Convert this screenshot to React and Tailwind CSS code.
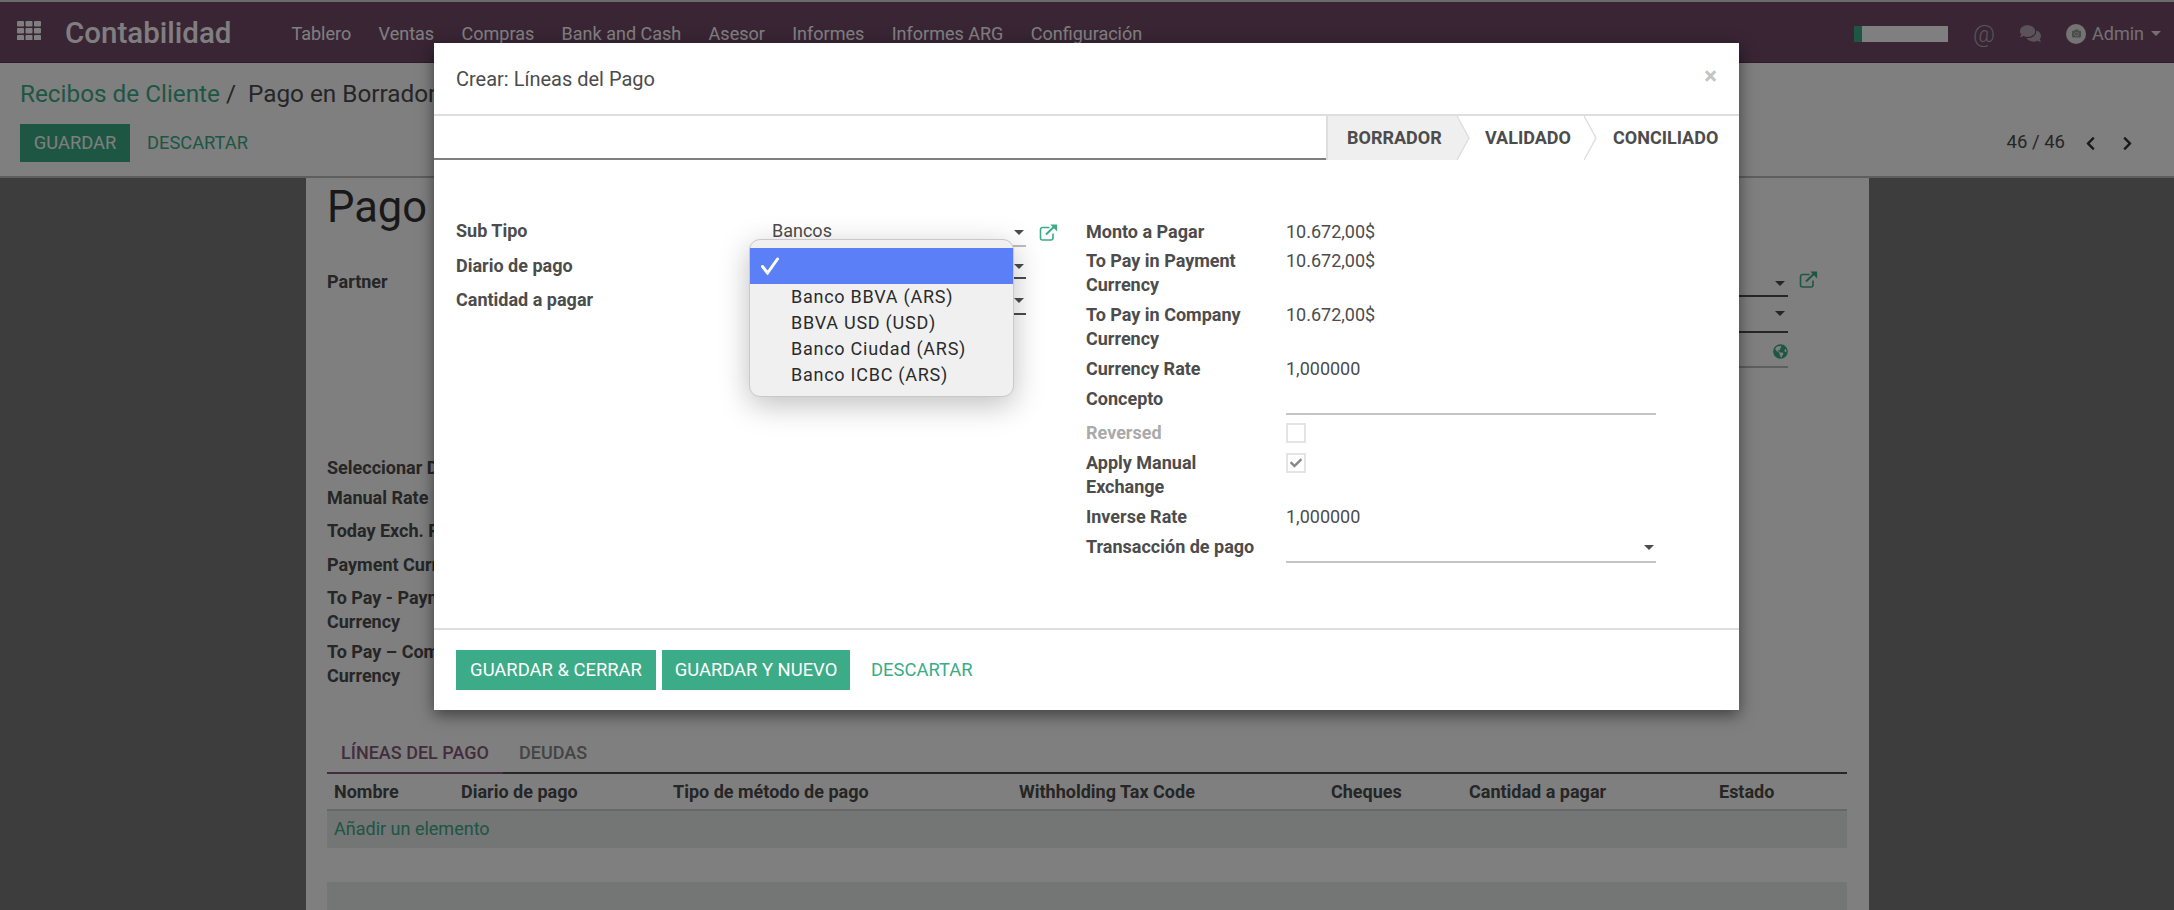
import React from "react";
import { FaCheck, FaChevronLeft, FaChevronRight, FaComments, FaCamera, FaGlobeAmericas } from "react-icons/fa";

const Caret = ({ className = "" }) => (
  <span className={"block w-0 h-0 border-x-[5px] border-x-transparent border-t-[5px] border-t-[#4c4c4c] " + className} />
);

const ExtLink = ({ className = "" }) => (
  <svg viewBox="0 0 18 17" className={"w-[19px] h-[17px] " + className} fill="none" stroke="currentColor">
    <path d="M10 3.5H3a2 2 0 0 0-2 2V14a2 2 0 0 0 2 2h8.5a2 2 0 0 0 2-2V9.5" strokeWidth="1.6" />
    <path d="M6.5 10.5 14.5 2.7" strokeWidth="2" />
    <path d="M10.8 0.6H17.6V7.4Z" fill="currentColor" stroke="none" />
  </svg>
);

const AppsIcon = () => (
  <svg viewBox="0 0 24 19" className="w-[24px] h-[19px] -mt-[6px]" fill="#fff">
    {[0, 7, 14].map((y) =>
      [0, 8.5, 17].map((x) => <rect key={x + "-" + y} x={x} y={y} width="7" height="5.5" rx="1" />)
    )}
  </svg>
);

const menu = ["Tablero", "Ventas", "Compras", "Bank and Cash", "Asesor", "Informes", "Informes ARG", "Configuración"];

const Nav = () => (
  <header className="h-[63px] shrink-0 border-t-2 border-t-[#d8d8d8] border-b border-b-[#5c3a54] bg-[#734a69] text-white flex items-center pl-[17px] pr-[13px] pt-[3px]">
    <AppsIcon />
    <span className="ml-[24px] text-[29.5px] font-medium leading-none">Contabilidad</span>
    <nav className="ml-[60px] flex gap-[27.4px] text-[18px]">
      {menu.map((m) => (
        <span key={m}>{m}</span>
      ))}
    </nav>
    <div className="ml-auto flex items-center">
      <div className="w-[94px] h-[16px] bg-white flex">
        <div className="w-[8px] bg-[#3bac87]" />
      </div>
      <span className="ml-[25px] text-[24px] font-light text-[#b9a6b5] leading-none">@</span>
      <FaComments className="ml-[25px] text-[21px] text-[#b9a6b5]" />
      <span className="ml-[25px] w-[20px] h-[20px] rounded-full bg-[#e8e8e8] flex items-center justify-center">
        <FaCamera className="text-[9px] text-[#999]" />
      </span>
      <span className="ml-[6px] text-[18px] text-[#e8e0e6]">Admin</span>
      <span className="ml-[7px] w-0 h-0 border-x-[5px] border-x-transparent border-t-[5px] border-t-[#e8e0e6]" />
    </div>
  </header>
);

const ControlPanel = () => (
  <section className="h-[115px] shrink-0 bg-white border-b-2 border-b-[#bdbdbd] px-[20px] pt-[13px] flex flex-col text-[#4c4c4c]">
    <div className="text-[24.3px] leading-[36px]">
      <span className="text-[#3bac87]">Recibos de Cliente</span> <span>/&nbsp; Pago en Borrador</span>
    </div>
    <div className="mt-[12px] flex items-center justify-between">
      <div className="flex items-center">
        <button className="w-[110px] h-[38px] bg-[#3bac87] text-white text-[18.3px]">GUARDAR</button>
        <span className="ml-[17px] text-[18.3px] text-[#3bac87]">DESCARTAR</span>
      </div>
      <div className="flex items-center pr-[19px]">
        <span className="text-[18.5px]">46 / 46</span>
        <FaChevronLeft className="ml-[18px] text-[15px] text-[#333]" />
        <FaChevronRight className="ml-[22px] text-[15px] text-[#333]" />
      </div>
    </div>
  </section>
);

const bgLabels = [
  ["Seleccionar Diario", "mt-[0px]"],
  ["Manual Rate", "mt-[6px]"],
  ["Today Exch. Rate", "mt-[9px]"],
  ["Payment Currency", "mt-[10px]"],
  ["To Pay - Payment\nCurrency", "mt-[9px]"],
  ["To Pay – Company\nCurrency", "mt-[6px]"],
];

const tableCols = [
  ["Nombre", "w-[127px]"],
  ["Diario de pago", "w-[212px]"],
  ["Tipo de método de pago", "w-[346px]"],
  ["Withholding Tax Code", "w-[312px]"],
  ["Cheques", "w-[138px]"],
  ["Cantidad a pagar", "w-[250px]"],
  ["Estado", ""],
];

const Sheet = () => (
  <div className="flex-1 min-h-0 bg-[#7a7a7a] flex justify-center overflow-hidden">
    <div className="ml-[1px] w-[1563px] bg-white pl-[21px] pr-[22px] text-[#4c4c4c] text-[18px]">
      <div className="h-[62px] text-[43.5px] leading-[60px] text-[#333]">Pago</div>
      <div className="flex h-[199px] pt-[27px]">
        <span className="font-bold w-[200px] pt-[1px]">Partner</span>
        <div className="ml-auto w-[200px] mr-[29px] flex flex-col pr-[30px] h-[102px]">
          <div className="relative h-[30px] border-b-2 border-b-[#4c4c4c]">
            <Caret className="absolute right-[3px] top-[14px]" />
            <ExtLink className="absolute -right-[30px] top-[4px] text-[#3bac87]" />
          </div>
          <div className="relative h-[36px] border-b-2 border-b-[#4c4c4c]">
            <Caret className="absolute right-[3px] top-[14px]" />
          </div>
          <div className="relative h-[35px] border-b-2 border-b-[#bdbdbd]">
            <FaGlobeAmericas className="absolute right-[0px] top-[11px] text-[15px] text-[#3bac87]" />
          </div>
        </div>
      </div>
      <div className="font-bold leading-[24px] h-[296px]">
        <div className="pt-[17px]">
          {bgLabels.map(([t, m]) => (
            <div key={t} className={"whitespace-pre-line " + m}>
              {t}
            </div>
          ))}
        </div>
      </div>
      <div className="flex border-b-2 border-b-[#4c4c4c] h-[40px] -mt-[1px]">
        <span className="w-[176px] border-b-2 border-b-[#875a7b] -mb-[2px] text-center font-medium text-[#875a7b] leading-[38px] uppercase">
          Líneas del Pago
        </span>
        <span className="ml-[16px] font-medium text-[#888] leading-[38px]">DEUDAS</span>
      </div>
      <div className="flex h-[37px] items-center border-b-2 border-b-[#cfcfcf] pl-[7px] font-bold whitespace-nowrap">
        {tableCols.map(([c, w]) => (
          <span key={c} className={w}>
            {c}
          </span>
        ))}
      </div>
      <div className="h-[37px] bg-[#e8ebea] pl-[7px] leading-[36px] text-[#3bac87]">Añadir un elemento</div>
      <div className="h-[34px]" />
      <div className="h-[62px] bg-[#e8ebea]" />
    </div>
  </div>
);

const Chevron = () => (
  <svg viewBox="0 0 13 44" className="w-[13px] h-[44px] absolute -right-[13px] top-0 z-10" fill="none">
    <path d="M0 0 12 22 0 44" stroke="#dcdcdc" strokeWidth="1.3" />
  </svg>
);

const StatusBar = () => (
  <div className="h-[46px] border-t-2 border-t-[#dedede] flex items-stretch">
    <div className="w-[892px] border-b-2 border-b-[#7f7f7f]" />
    <div className="relative w-[131px] bg-[#efefef] border-l-2 border-l-[#dedede] flex items-center pl-[19px] font-bold text-[18px] text-[#4c4c4c]">
      BORRADOR
      <svg viewBox="0 0 13 44" className="w-[13px] h-[44px] absolute -right-[13px] top-0" fill="#efefef">
        <path d="M0 0 12 22 0 44Z" />
      </svg>
      <Chevron />
    </div>
    <div className="relative w-[127px] flex items-center pl-[28px] font-bold text-[18px] text-[#4c4c4c]">
      VALIDADO
      <Chevron />
    </div>
    <div className="flex items-center pl-[29px] font-bold text-[18px] text-[#4c4c4c]">CONCILIADO</div>
  </div>
);

const LeftRow = ({ label, value, h, link, tone, shift }) => (
  <div className={"flex " + h}>
    <span className={"w-[315px] font-bold " + (shift || "")}>{label}</span>
    <div className={"relative w-[255px] border-b-2 " + (tone || "border-b-[#4c4c4c]")}>
      <span className={"block pl-[1px] " + (shift || "")}>{value}</span>
      <Caret className="absolute right-[2px] top-[10px]" />
      {link && <ExtLink className="absolute -right-[32px] top-[4px] text-[#3bac87]" />}
    </div>
  </div>
);

const RightRow = ({ label, children, mb, muted }) => (
  <div className={"flex " + mb}>
    <span className={"w-[200px] pr-[20px] font-bold " + (muted ? "text-[#aaa]" : "")}>{label}</span>
    <div className="w-[370px]">{children}</div>
  </div>
);

const Box = ({ checked }) => (
  <span className="mt-[2px] block w-[20px] h-[20px] border-2 border-[#e4e4e4] flex items-center justify-center">
    {checked && <FaCheck className="text-[12px] text-[#888]" />}
  </span>
);

const NativeSelect = () => (
  <div className="absolute left-[315px] top-[79px] w-[265px] h-[158px] rounded-[11px] bg-[#f0f0f0] border border-[#c9c9c9] shadow-[0_8px_30px_rgba(0,0,0,0.25)] pt-[8px] text-[18px] tracking-[0.75px] text-[#2b2b2b]">
    <div className="h-[36px] bg-[#5a7ff7] flex items-center pl-[10px]">
      <svg viewBox="0 0 20 18" className="w-[20px] h-[18px]" fill="none" stroke="#fff" strokeWidth="3" strokeLinecap="round">
        <path d="M2.5 9.5 7.5 16 17.5 2" />
      </svg>
    </div>
    <div className="pl-[41px] leading-[26px]">
      <div>Banco BBVA (ARS)</div>
      <div>BBVA USD (USD)</div>
      <div>Banco Ciudad (ARS)</div>
      <div>Banco ICBC (ARS)</div>
    </div>
  </div>
);

const Modal = () => (
  <div className="absolute left-[434px] top-[43px] w-[1305px] h-[667px] bg-white flex flex-col shadow-[0_5px_15px_rgba(0,0,0,0.5)] text-[18px] text-[#4c4c4c] leading-[24px]">
    <div className="h-[71px] shrink-0 flex items-center justify-between pl-[22px] pr-[22px]">
      <span className="text-[20px]">Crear: Líneas del Pago</span>
      <span className="text-[24px] font-bold text-[#c4c4c4] -mt-[6px]">×</span>
    </div>
    <StatusBar />
    <div className="relative h-[468px] shrink-0 pl-[22px] pt-[60px] flex">
      <div className="w-[630px]">
        <LeftRow label="Sub Tipo" value="Bancos" h="h-[27px]" link tone="border-b-[#bdbdbd]" shift="-mt-[1px]" />
        <LeftRow label="Diario de pago" h="h-[32px] pt-[7px]" />
        <LeftRow label="Cantidad a pagar" h="h-[36px] pt-[9px]" />
      </div>
      <div>
        <RightRow label="Monto a Pagar" mb="mb-[5px]">10.672,00$</RightRow>
        <RightRow label="To Pay in Payment Currency" mb="mb-[6px]">10.672,00$</RightRow>
        <RightRow label="To Pay in Company Currency" mb="mb-[6px]">10.672,00$</RightRow>
        <RightRow label="Currency Rate" mb="mb-[6px]">1,000000</RightRow>
        <RightRow label="Concepto" mb="mb-[6px]">
          <div className="h-[28px] border-b-2 border-b-[#c4c4c4]" />
        </RightRow>
        <RightRow label="Reversed" mb="mb-[6px]" muted>
          <Box />
        </RightRow>
        <RightRow label="Apply Manual Exchange" mb="mb-[6px]">
          <Box checked />
        </RightRow>
        <RightRow label="Inverse Rate" mb="mb-[6px]">1,000000</RightRow>
        <RightRow label="Transacción de pago" mb="">
          <div className="relative h-[28px] border-b-2 border-b-[#c4c4c4]">
            <Caret className="absolute right-[2px] top-[10px]" />
          </div>
        </RightRow>
      </div>
      <NativeSelect />
    </div>
    <div className="flex-1 border-t-2 border-t-[#dedede] pl-[22px] pt-[20px] flex items-start">
      <button className="w-[200px] h-[40px] bg-[#3bac87] text-white text-[18.4px]">GUARDAR &amp; CERRAR</button>
      <button className="ml-[6px] w-[188px] h-[40px] bg-[#3bac87] text-white text-[18.4px]">GUARDAR Y NUEVO</button>
      <span className="ml-[21px] leading-[40px] text-[18.4px] text-[#3bac87]">DESCARTAR</span>
    </div>
  </div>
);

export default function App() {
  return (
    <div className="relative w-[2174px] h-[910px] overflow-hidden flex flex-col bg-white font-['Roboto',sans-serif]">
      <Nav />
      <ControlPanel />
      <Sheet />
      <div className="absolute inset-0 bg-black/50" />
      <Modal />
    </div>
  );
}
